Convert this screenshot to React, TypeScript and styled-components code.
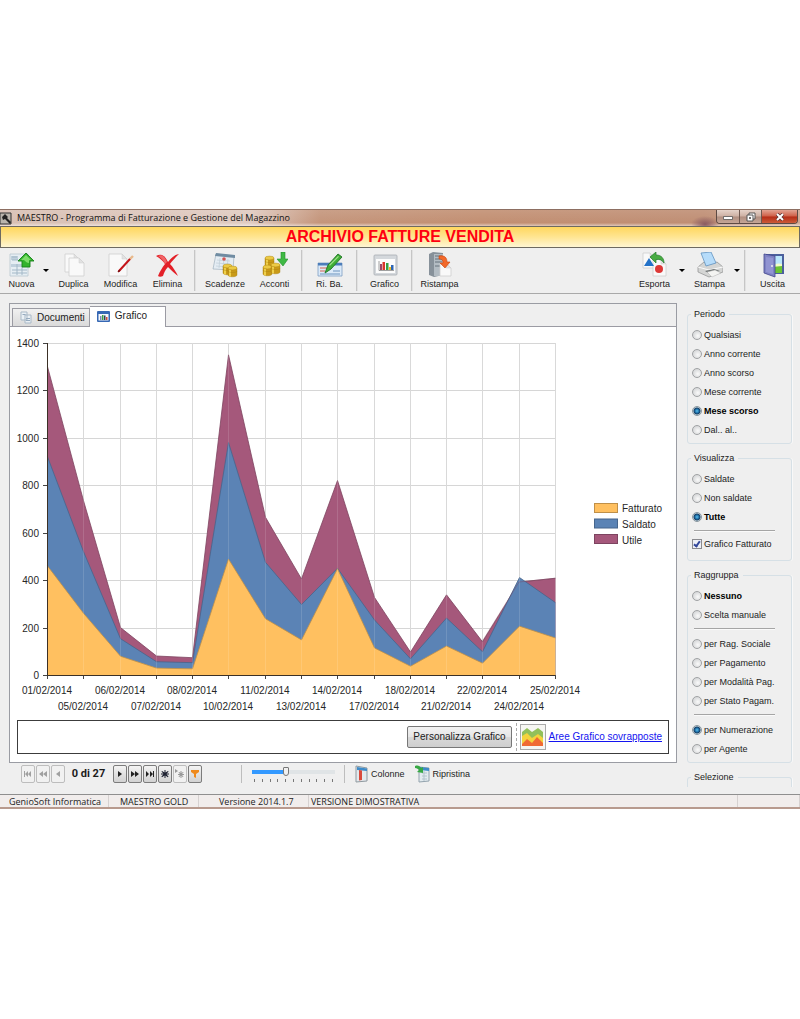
import React from 'react';
import styled, { createGlobalStyle, css } from 'styled-components';

const GlobalStyle = createGlobalStyle`
  *, *::before, *::after { box-sizing: border-box; }
  body {
    margin: 0;
    background: #fff;
    color: #1c1c1c;
    font-family: "Liberation Sans", Arial, sans-serif;
    font-size: 9px;
    line-height: 12px;
  }
  button, input { font: inherit; color: inherit; }
`;

const Page = styled.div`
  padding-top: 209px;
`;

const Window = styled.main`
  background: #efefef;
  min-width: 760px;
`;

/* ---------- title bar ---------- */

const TitleBar = styled.header`
  display: flex;
  align-items: center;
  height: 17px;
  border-top: 1px solid #8d6f62;
  background:
    radial-gradient(ellipse 14px 8px at 705px 14px, #8a5a60, transparent),
    linear-gradient(to bottom, rgba(255, 255, 255, 0.1), transparent 80%, rgba(255, 255, 255, 0.5)),
    linear-gradient(to right, #d8bfb3 0, #e0cbc1 250px, #c4957b 320px, #c28f72 60%, #bf8e74 88%, #cfa792);
`;

const AppTitle = styled.h1`
  flex: 1;
  margin: 0 0 0 5px;
  font: 400 9px/14px "Open Sans", sans-serif;
  color: #111;
`;

const WindowButtons = styled.div`
  display: flex;
  align-self: flex-start;
  margin-right: 2px;
  border: 1px solid #5d4a44;
  border-top: 0;
  border-radius: 0 0 4px 4px;
  overflow: hidden;
`;

const WindowButton = styled.button<{ $close?: boolean }>`
  display: flex;
  align-items: center;
  justify-content: center;
  width: ${(p) => (p.$close ? 36 : 22)}px;
  height: 13px;
  padding: 0;
  border: 0;
  background: linear-gradient(#e5d2c9, #cdb0a3 48%, #b08e80 52%, #c5a697);
  ${(p) => p.$close && css`background: linear-gradient(#e2a392, #cf5f47 48%, #b52c16 52%, #cc5a38);`}
  & + & { border-left: 1px solid #6f5850; }
`;

const Banner = styled.h2`
  margin: 0;
  border: 1px solid #6e6a60;
  background: linear-gradient(#ffd75e, #ffe592 50%, #fff6d3);
  color: #ff0010;
  font-size: 16px;
  line-height: 20px;
  font-weight: 700;
  text-align: center;
`;

/* ---------- main toolbar ---------- */

const Toolbar = styled.nav`
  display: flex;
  align-items: stretch;
  height: 46px;
  padding: 0 4px 0 1px;
  border-bottom: 1px solid #a9a9a9;
`;

const Spacer = styled.div`
  flex: 1;
`;

const ToolButton = styled.button<{ $width?: number }>`
  display: flex;
  flex-direction: column;
  align-items: center;
  width: ${(p) => p.$width ?? 47}px;
  padding: 4px 0 0;
  border: 0;
  background: none;
  line-height: 12px;
  white-space: nowrap;
  svg { display: block; }
`;

const DropButton = styled.button`
  width: 8px;
  padding: 0;
  border: 0;
  background: none;
  svg { display: block; margin: 0 auto; }
`;

const ToolSeparator = styled.div`
  width: 2px;
  margin: 2px 3px;
  background: #c6c6c6;
  border-right: 1px solid #e2e2e2;
`;

/* ---------- body ---------- */

const Body = styled.div`
  display: grid;
  grid-template-columns: minmax(0, 1fr) 123px;
  padding-top: 9px;
`;

const Content = styled.div`
  display: flex;
  flex-direction: column;
  padding-left: 9px;
`;

const Panel = styled.section`
  border: 1px solid #9a9ca3;
  background: #fff;
`;

const TabStrip = styled.div`
  display: flex;
  align-items: flex-end;
  height: 23px;
  padding: 2px 0 0 2px;
  background: #efefef;
  box-shadow: inset 0 -1px #9b9ba3;
`;

const Tab = styled.button<{ $active?: boolean }>`
  display: flex;
  align-items: center;
  gap: 5px;
  height: 19px;
  padding: 0 4px 0 7px;
  border: 1px solid #9b9ba3;
  background: linear-gradient(#f1f1f1, #dadada);
  font-size: 10px;
  ${(p) =>
    p.$active &&
    css`
      height: 21px;
      padding: 0 18px 2px 7px;
      border-left: 0;
      border-bottom: 0;
      background: #fff;
    `}
`;

const ChartSvg = styled.svg`
  display: block;
  width: 100%;
  height: auto;
  text { font-size: 10px; fill: #262626; }
`;

const ChartActions = styled.div`
  display: flex;
  align-items: center;
  justify-content: flex-end;
  height: 34px;
  margin: 3px 7px 8px;
  padding-right: 6px;
  border: 1px solid #3c3c3c;
`;

const PushButton = styled.button`
  height: 22px;
  padding: 0 5px;
  border: 1px solid #777;
  border-radius: 2px;
  background: linear-gradient(#f2f2f2, #e6e6e6 48%, #d8d8d8 52%, #cecece);
  font-size: 10px;
`;

const ActionDivider = styled.div`
  height: 28px;
  margin: 0 3px 0 4px;
  border-left: 1px dashed #aaa;
`;

const IconTile = styled.div`
  width: 26px;
  height: 26px;
  margin-right: 3px;
  border: 1px solid #aaa;
  background: #f6f6f3;
  svg { display: block; }
`;

const ActionLink = styled.a`
  color: #1414f0;
  font-size: 10px;
  text-decoration: underline;
`;

/* ---------- record bar ---------- */

const RecordBar = styled.div`
  display: flex;
  align-items: center;
  height: 22px;
  padding-left: 12px;
`;

const RecordButton = styled.button`
  display: flex;
  align-items: center;
  justify-content: center;
  width: 14px;
  height: 18px;
  margin-right: 1px;
  padding: 0;
  border: 1px solid #7c7c7c;
  border-radius: 2px;
  background: linear-gradient(#f4f4f4, #e2e2e2 50%, #d2d2d2);
  &:disabled { border-color: #bdbdbd; background: #f1f1f1; }
`;

const RecordCount = styled.output`
  width: 47px;
  padding-right: 2px;
  text-align: center;
  font: 700 11px/14px Roboto, sans-serif;
`;

const BarDivider = styled.div<{ $before: number; $after: number }>`
  width: 1px;
  height: 18px;
  margin: 0 ${(p) => p.$after}px 0 ${(p) => p.$before}px;
  background: #bdbdbd;
`;

const Zoom = styled.div`
  display: flex;
  flex-direction: column;
  width: 83px;
`;

const ZoomInput = styled.input`
  appearance: none;
  width: 100%;
  height: 10px;
  margin: 0;
  background: linear-gradient(to right, #3399ff 33px, #e0e4e6 33px) center / 100% 4px no-repeat;
  &::-webkit-slider-thumb {
    appearance: none;
    width: 6px;
    height: 9px;
    border: 1px solid #777;
    border-radius: 1px 1px 3px 3px;
    background: #f0f0f0;
  }
`;

const Ticks = styled.div`
  display: flex;
  justify-content: space-between;
  margin: 2px 2px 0;
  span { width: 1px; height: 3px; background: #777; }
`;

const GridButton = styled.button`
  display: flex;
  align-items: center;
  gap: 3px;
  margin-right: 10px;
  padding: 0;
  border: 0;
  background: none;
`;

/* ---------- filters ---------- */

const Filters = styled.aside`
  display: flex;
  flex-direction: column;
  gap: 8px;
  padding: 5px 8px 7px 10px;
`;

const Group = styled.fieldset<{ $bottom?: number; $open?: boolean }>`
  min-width: 0;
  margin: 0;
  padding: 5px 4px ${(p) => p.$bottom ?? 4}px;
  border: 1px solid #d6e0e6;
  border-radius: 3px;
  box-shadow: 1px 0 #f8f8f8;
  ${(p) =>
    p.$open &&
    css`
      height: 16px;
      padding: 0 4px;
      border-bottom: 0;
      border-radius: 3px 3px 0 0;
    `}
  legend { margin-left: -1px; padding: 0 4px 0 3px; }
`;

const Choice = styled.label<{ $bold?: boolean }>`
  display: flex;
  align-items: center;
  gap: 2px;
  height: 19px;
  white-space: nowrap;
  font-weight: ${(p) => (p.$bold ? 700 : 400)};
  color: ${(p) => (p.$bold ? '#000' : 'inherit')};
`;

const Radio = styled.input`
  appearance: none;
  flex: none;
  width: 10px;
  height: 10px;
  margin: 0;
  border: 1px solid #a0a2a4;
  border-radius: 50%;
  background: radial-gradient(circle at 60% 60%, #fafafa, #c9cbcd);
  &:checked {
    border-color: #8a979f;
    background: radial-gradient(circle, #5cc0ec 0, #1b6ca6 2px, #173f63 3px, #d5e0e8 4px);
  }
`;

const Check = styled.input`
  appearance: none;
  flex: none;
  width: 10px;
  height: 10px;
  margin: 0;
  border: 1px solid #8b8b8f;
  background: #eef0f6;
  display: grid;
  place-items: center;
  &:checked::before {
    content: "";
    width: 4px;
    height: 7px;
    border: solid #33479a;
    border-width: 0 2px 2px 0;
    transform: rotate(35deg);
  }
`;

const Rule = styled.hr<{ $tight?: boolean }>`
  height: 2px;
  margin: 4px 12px ${(p) => (p.$tight ? 2 : 4)}px 2px;
  border: 0;
  border-top: 1px solid #a5a5a5;
  border-bottom: 1px solid #fafafa;
`;

/* ---------- status bar ---------- */

const StatusBar = styled.footer`
  display: flex;
  height: 15px;
  border-top: 1px solid #8f8f8f;
  border-bottom: 2px solid #b89a8e;
  background: #f1edec;
  color: #222;
  font: 400 9px/14px "Open Sans", sans-serif;
`;

const StatusCell = styled.div<{ $width?: number; $indent: number }>`
  ${(p) => (p.$width ? `width: ${p.$width}px;` : 'flex: 1;')}
  padding-left: ${(p) => p.$indent}px;
  border-right: 1px solid #d6d1d0;
  white-space: nowrap;
`;

/* ---------- icons ---------- */

const Icon = ({ children, size = 26 }: { children: React.ReactNode; size?: number }) => (
  <svg width={size} height={size} viewBox="0 0 26 26" aria-hidden="true">
    {children}
  </svg>
);

const Sheet = ({ x, y, w = 17, h = 21 }: { x: number; y: number; w?: number; h?: number }) => (
  <g>
    <path d={`M${x} ${y}h${w - 5}l5 5v${h - 5}h${-w}z`} fill="#f9f9f9" stroke="#cfcfcf" strokeWidth=".8" />
    <path d={`M${x + w - 5} ${y}v5h5z`} fill="#e2e2e2" stroke="#cfcfcf" strokeWidth=".5" />
  </g>
);

const NewIcon = () => (
  <Icon>
    <path d="M1 2h18v22H1z" fill="#e6eef3" stroke="#b9c6cf" strokeWidth=".8" />
    <path d="M2 4h7v4H2zM2 12h17v3H2z" fill="#bfd0dc" />
    <path d="M3 5h5M3 8h6M3 18h15M3 21h15M8 12v11M13 15v8" stroke="#a3b8c7" strokeWidth="1" fill="none" />
    <path d="M17 1l8 8h-4v6h-8V9h-4z" fill="#33b32c" stroke="#16821a" strokeWidth=".9" />
    <path d="M17 3l5 5h-2v3c-2 0-3-1-5-3h-3z" fill="#7ddd69" />
  </Icon>
);

const CopyIcon = () => (
  <Icon>
    <Sheet x={4} y={2} w={14} h={18} />
    <Sheet x={8} y={6} w={15} h={18} />
  </Icon>
);

const EditIcon = () => (
  <Icon>
    <Sheet x={1} y={2} w={18} h={22} />
    <path d="M11 19L22 7" stroke="#c4151b" strokeWidth="2" strokeLinecap="round" />
    <path d="M22 7l3-3" stroke="#e8b98c" strokeWidth="2.400" />
    <path d="M10 20l2-2" stroke="#7b0f12" strokeWidth="1.500" />
  </Icon>
);

const DeleteIcon = () => (
  <Icon>
    <path d="M1 4c5-3 9-1 12 6c3-4 6-7 11-8c-4 4-7 7-9 10c3 3 6 8 8 12c-4-3-7-6-10-9c-3 3-4 6-5 9c-2 1-4 1-5 0c2-5 4-8 7-12c-2-3-5-6-9-8z" fill="#e32028" />
    <path d="M3 4c4-2 7 1 9 6l-2 2c-2-4-4-6-7-8z" fill="#f06568" />
  </Icon>
);

const Coins = ({ x, y }: { x: number; y: number }) => (
  <g stroke="#a57e12" strokeWidth=".4">
    <path d={`M${x} ${y}v7c0 2.400 9 2.400 9 0v-7z`} fill="#c99a18" />
    <path d={`M${x + 1} ${y + 1}v7l2 .8v-7z`} fill="#efd04c" stroke="none" />
    <path d={`M${x} ${y + 3}c0 2 9 2 9 0`} fill="none" />
    <ellipse cx={x + 4.5} cy={y} rx="4.500" ry="1.900" fill="#ecca45" />
  </g>
);

const DueIcon = () => (
  <Icon>
    <path d="M4 2l18 2-1 14-20-1z" fill="#e4ecf3" stroke="#94a6b5" strokeWidth=".6" />
    <path d="M4 1l19 2v3L3 4z" fill="#708ca2" />
    <path d="M5 8l13 1M4 11l14 1M4 14l13 1M8 6l-1 10M12 6l-1 10M16 7l-1 9" stroke="#c3d0da" strokeWidth=".8" />
    <circle cx="12" cy="7" r="1.800" fill="#d45553" />
    <Coins x={11} y={14} />
    <Coins x={16} y={16} />
  </Icon>
);

const DepositIcon = () => (
  <Icon>
    <Coins x={3} y={6} />
    <Coins x={1} y={15} />
    <Coins x={9} y={13} />
    <path d="M19 0h4v7h3l-5 7-6-7h4z" fill="#3fb944" stroke="#218d2b" strokeWidth=".6" />
  </Icon>
);

const ChequeIcon = () => (
  <Icon>
    <path d="M1 11h24v13H1z" fill="#dceaf8" stroke="#7f9fc3" strokeWidth=".8" />
    <path d="M1 11h24v2.500H1z" fill="#4c7dba" />
    <path d="M3 16h8M3 19h5" stroke="#d56350" strokeWidth="1.200" />
    <path d="M16 19h7M3 22h20" stroke="#6c93bd" strokeWidth="1.200" />
    <path d="M8 21l3-8L21 2l4 3-11 12z" fill="#3fae35" stroke="#1f7426" strokeWidth=".9" />
    <path d="M12 13l9-9 1 .8-9 9z" fill="#9fe08a" />
  </Icon>
);

const ChartIcon = () => (
  <Icon>
    <rect x="2" y="3" width="23" height="20" rx="1" fill="#d4d8dc" stroke="#a8adb2" strokeWidth=".8" />
    <path d="M4 7h19v14H4z" fill="#fcfcfc" />
    <path d="M7 9v9.500h15" stroke="#888" strokeWidth=".8" fill="none" />
    <path d="M8 12h2v6H8z" fill="#9a4768" />
    <path d="M10.500 10h2.500v8h-2.500z" fill="#d9362b" />
    <path d="M14 11h2.500v7H14z" fill="#35a044" />
    <path d="M17 15h2v3h-2z" fill="#f0b825" />
    <path d="M19 13h2.500v5H19z" fill="#2e66b4" />
  </Icon>
);

const ReprintIcon = () => (
  <Icon>
    <path d="M2 2l4-2 10 1v22l-9 2-5-2z" fill="#87919a" />
    <path d="M7 2h9v22H7z" fill="#b3bcc3" />
    <path d="M8 4h7M8 7h7M8 10h7M8 14h7" stroke="#66727c" strokeWidth="1" />
    <Sheet x={13} y={11} w={11} h={13} />
    <path d="M12 4c6-1 8 2 8 6h3l-5 6-5-5h3c0-3-1-4-4-4z" fill="#f2692a" stroke="#c64410" strokeWidth=".6" />
  </Icon>
);

const ExportIcon = () => (
  <Icon>
    <Sheet x={1} y={1} w={12} h={15} />
    <Sheet x={11} y={7} w={13} h={17} />
    <path d="M7 6l5 8H2z" fill="#2372c8" />
    <circle cx="17" cy="17" r="4" fill="#dd3836" />
    <path d="M8 5l6-5v3c6 0 8 4 8 8-2-3-4-4-8-3.500V11z" fill="#48ac42" stroke="#24792b" strokeWidth=".7" />
  </Icon>
);

const PrintIcon = () => (
  <Icon>
    <path d="M1 15l6-5 3 3 10-3 6 5v5l-14 5-11-5z" fill="#d4d5d4" stroke="#8c8e8e" strokeWidth=".7" />
    <path d="M4 1l10-1 5 11-10 3z" fill="#b6dcfa" stroke="#6293c0" strokeWidth=".8" />
    <path d="M1 15l11 3 14-3" stroke="#fafafa" fill="none" />
    <path d="M8 19l9-2 6 2-10 3z" fill="#6d7272" />
    <path d="M10 20l8-2 6 3-9 4z" fill="#f4f4f2" stroke="#aaa" strokeWidth=".4" />
  </Icon>
);

const ExitIcon = () => (
  <Icon>
    <path d="M6 2h18v20H6z" fill="#4b5f9c" />
    <path d="M12 4h10v9H12z" fill="#b9e6fb" />
    <path d="M12 13h10v8H12z" fill="#6bc434" />
    <path d="M12 15c3-4 7-4 10-3v2z" fill="#f2fcc8" />
    <path d="M4 2l11 2v21L4 21z" fill="#7f82c4" stroke="#42468d" strokeWidth=".8" />
    <path d="M6 5l7 1v16l-7-2z" fill="#9194d2" />
    <circle cx="12" cy="14" r="1" fill="#eee" />
  </Icon>
);

const DocumentsIcon = () => (
  <svg width="12" height="13" viewBox="0 0 12 13" aria-hidden="true">
    <path d="M1 1h6v8H1zM5 4h6v8H5z" fill="#eaf0f5" stroke="#a9b9c7" />
    <path d="M2.500 3.500h3M6 7.500h4M6 9.500h4" stroke="#96abbf" />
  </svg>
);

const GraphTabIcon = () => (
  <svg width="13" height="11" viewBox="0 0 13 11" aria-hidden="true">
    <rect width="13" height="11" rx="1" fill="#3668b4" />
    <path d="M1.500 3h10v6.500h-10z" fill="#f4f7fb" />
    <path d="M3 5h1.500v4H3z" fill="#7d8bb0" />
    <path d="M5 4h1.500v5H5z" fill="#3ca145" />
    <path d="M7 4.500h1.500V9H7z" fill="#33405e" />
    <path d="M9 6h1.500v3H9z" fill="#cd4b3b" />
  </svg>
);

const AreasIcon = () => (
  <svg width="24" height="24" viewBox="0 0 24 24" aria-hidden="true">
    <path d="M1 7l5-4 5 4 6-4 5 4v14H1z" fill="#92c05a" />
    <path d="M1 11l5-3 5 5 6-4 5 4v8H1z" fill="#f4d33d" />
    <path d="M1 19l5-5 5 4 5-6 6 6v3H1z" fill="#f06a34" />
  </svg>
);

const ColumnsIcon = () => (
  <svg width="13" height="18" viewBox="0 0 13 18" aria-hidden="true">
    <path d="M1 1l11 2v13L1 17z" fill="#e3e9ed" stroke="#8f999f" />
    <path d="M2 2l10 1.500V6L2 5z" fill="#3f8bc8" />
    <path d="M4 5l3 .5V15l-3 .5z" fill="#d94a3c" />
  </svg>
);

const RestoreIcon = () => (
  <svg width="15" height="18" viewBox="0 0 15 18" aria-hidden="true">
    <path d="M4 2l10 1v13L4 17z" fill="#e3ebef" stroke="#93a3ad" />
    <path d="M5 2l9 1v3L5 5z" fill="#3f8bc8" />
    <path d="M7 8h5M7 11h5M7 14h5M9 6v10" stroke="#b4c3cc" />
    <path d="M0 1c3-1 5 0 6 2l2-1v6L2 7l2-2C3 4 2 3 0 3z" fill="#37a844" />
  </svg>
);

const DropArrow = () => (
  <svg width="6" height="3" viewBox="0 0 6 3" aria-hidden="true">
    <path d="M0 0h6L3 3z" fill="#000" />
  </svg>
);

type Glyph = 'first' | 'rewind' | 'prev' | 'next' | 'forward' | 'last' | 'new' | 'mark' | 'filter';

const glyphPaths: Record<Glyph, string> = {
  first: 'M1 2h1v6H1zM2 5l3-3v6zM5 5l3-3v6z',
  rewind: 'M1 5l4-3v6zM5 5l4-3v6z',
  prev: 'M3 5l4-3v6z',
  next: 'M3 2l4 3-4 3z',
  forward: 'M1 2l4 3-4 3zM5 2l4 3-4 3z',
  last: 'M1 2l3 3-3 3zM5 2l3 3-3 3zM8 2h1v6H8z',
  new: 'M4.500 1h1v2.500L8 2l.6.7L6.500 4.500H9v1H6.500l2 2-.7.7L5.500 6.500V9h-1V6.500L2 8.200l-.6-.7 2-2H1v-1h2.500L1.500 2.700 2 2l2.500 1.500z',
  mark: 'M0 0l3 2-3 2zM5.500 2h1v2L8 3l.6.6L7 5h2v1H7l1.500 1.500-.7.700-1.300-1.500V9h-1V6.700L4.200 8.200l-.7-.7L5 6H3V5h2L3.500 3.600 4.200 3l1.300 1z',
  filter: 'M1 1h8v2L6 5v4L4 8V5L1 3z',
};

const RecordGlyph = ({ name, color }: { name: Glyph; color: string }) => (
  <svg width="10" height="10" viewBox="0 0 10 10" aria-hidden="true">
    <path d={glyphPaths[name]} fill={color} />
  </svg>
);

/* ---------- chart ---------- */

const days = ['01', '05', '06', '07', '08', '10', '11', '13', '14', '17', '18', '21', '22', '24', '25'];
const series = [
  { name: 'Utile', color: '#a5587b', line: '#7d4460', values: [1300, 735, 200, 80, 73, 1350, 665, 405, 820, 327, 97, 338, 140, 392, 408] },
  { name: 'Saldato', color: '#5b83b5', line: '#46658c', values: [920, 520, 153, 56, 52, 980, 475, 297, 450, 232, 68, 240, 98, 411, 305] },
  { name: 'Fatturato', color: '#ffc060', line: '#c09048', values: [460, 260, 79, 29, 26, 489, 237, 148, 448, 114, 37, 122, 50, 206, 156] },
];
const LEFT = 37;
const RIGHT = 545;
const BASE = 348;
const px = (i: number) => Math.round(LEFT + ((RIGHT - LEFT) * i) / (days.length - 1));
const py = (v: number) => BASE - (v * 332) / 1400;
const levels = [0, 200, 400, 600, 800, 1000, 1200, 1400];

const Chart = () => (
  <ChartSvg viewBox="0 0 666 390" role="img" aria-label="Grafico fatture">
    {levels.map((v) => (
      <g key={v}>
        <path d={`M${LEFT} ${Math.round(py(v)) + 0.5}H${RIGHT}`} stroke="#d6d6d6" />
        <path d={`M${LEFT - 4} ${Math.round(py(v)) + 0.5}h4`} stroke="#444" />
        <text x="29" y={Math.round(py(v)) + 4} textAnchor="end">{v}</text>
      </g>
    ))}
    {days.map((d, i) => (
      <path key={d} d={`M${px(i) + 0.5} 16V${BASE}`} stroke="#d4d4d4" />
    ))}
    {series.map((s) => {
      const pts = s.values.map((v, i) => `${px(i) + 0.5},${py(v)}`).join(' ');
      return (
        <g key={s.name}>
          <polygon points={`${LEFT + 0.5},${BASE} ${pts} ${RIGHT + 0.5},${BASE}`} fill={s.color} />
          <polyline points={pts} fill="none" stroke={s.line} strokeWidth=".8" />
        </g>
      );
    })}
    <path d={`M${px(12)} ${py(140)}L${px(13)} ${py(392)}L${px(14)} ${py(408)}`} fill="none" stroke="#7d4460" strokeOpacity=".5" strokeWidth=".8" />
    {days.map((d, i) => (
      <g key={d}>
        <path d={`M${px(i) + 0.5} 16V${BASE}`} stroke="#fff" strokeOpacity=".13" />
        <path d={`M${px(i) + 0.5} ${BASE}v4`} stroke="#444" />
        <text x={px(i)} y={i % 2 ? 383 : 367} textAnchor="middle">{`${d}/02/2014`}</text>
      </g>
    ))}
    <path d={`M${LEFT + 0.5} 16V${BASE + 0.5}H${RIGHT}`} fill="none" stroke="#3b3026" />
    {[...series].reverse().map((s, i) => (
      <g key={s.name}>
        <rect x="584.500" y={176.5 + i * 15.5} width="23" height="9" fill={s.color} stroke={s.line} />
        <text x="612" y={185 + i * 16}>{s.name}</text>
      </g>
    ))}
  </ChartSvg>
);

/* ---------- composition ---------- */

interface Option {
  label: string;
  checked?: boolean;
  bold?: boolean;
}

const Radios = ({ name, options }: { name: string; options: Option[] }) => (
  <>
    {options.map((o) => (
      <Choice key={o.label} $bold={o.bold}>
        <Radio type="radio" name={name} defaultChecked={o.checked} />
        {o.label}
      </Choice>
    ))}
  </>
);

const Tool = ({ icon, label, width }: { icon: React.ReactNode; label: string; width?: number }) => (
  <ToolButton type="button" $width={width}>
    {icon}
    {label}
  </ToolButton>
);

const Drop = ({ label }: { label: string }) => (
  <DropButton type="button" aria-label={label}>
    <DropArrow />
  </DropButton>
);

export default function App() {
  return (
    <>
      <GlobalStyle />
      <Page>
        <Window>
          <TitleBar>
            <svg width="12" height="13" viewBox="0 0 12 13" aria-hidden="true">
              <path d="M0 1h11v11H0z" fill="#b9b4ac" stroke="#333" />
              <path d="M2 5l3-3 3 3-1 1 4 4-1 2-5-5-2 1z" fill="#222" />
            </svg>
            <AppTitle>MAESTRO - Programma di Fatturazione e Gestione del Magazzino</AppTitle>
            <WindowButtons>
              <WindowButton type="button" aria-label="Riduci a icona">
                <svg width="10" height="8" viewBox="0 0 10 8"><path d="M.5 3.500h9v3h-9z" fill="#fff" stroke="#555" strokeWidth=".8" /></svg>
              </WindowButton>
              <WindowButton type="button" aria-label="Ripristina finestra">
                <svg width="10" height="10" viewBox="0 0 10 10"><path d="M3 1h6v6H3z" fill="#fff" stroke="#555" /><path d="M1 3h6v6H1z" fill="#fff" stroke="#555" /><path d="M3.500 5.500h1v1h-1z" stroke="#555" /></svg>
              </WindowButton>
              <WindowButton type="button" $close aria-label="Chiudi">
                <svg width="10" height="8" viewBox="0 0 10 8"><path d="M2 1l6 6M8 1L2 7" stroke="#5d3432" strokeWidth="3.500" /><path d="M2 1l6 6M8 1L2 7" stroke="#fff" strokeWidth="2" /></svg>
              </WindowButton>
            </WindowButtons>
          </TitleBar>
          <Banner>ARCHIVIO FATTURE VENDITA</Banner>

          <Toolbar>
            <Tool icon={<NewIcon />} label="Nuova" width={41} />
            <Drop label="Opzioni nuova" />
            <Tool icon={<CopyIcon />} label="Duplica" />
            <Tool icon={<EditIcon />} label="Modifica" />
            <Tool icon={<DeleteIcon />} label="Elimina" />
            <ToolSeparator />
            <Tool icon={<DueIcon />} label="Scadenze" width={52} />
            <Tool icon={<DepositIcon />} label="Acconti" />
            <ToolSeparator />
            <Tool icon={<ChequeIcon />} label="Ri. Ba." />
            <ToolSeparator />
            <Tool icon={<ChartIcon />} label="Grafico" />
            <ToolSeparator />
            <Tool icon={<ReprintIcon />} label="Ristampa" />
            <Spacer />
            <Tool icon={<ExportIcon />} label="Esporta" />
            <Drop label="Opzioni esporta" />
            <Tool icon={<PrintIcon />} label="Stampa" />
            <Drop label="Opzioni stampa" />
            <ToolSeparator />
            <Tool icon={<ExitIcon />} label="Uscita" />
          </Toolbar>

          <Body>
            <Content>
              <Panel>
                <TabStrip>
                  <Tab type="button"><DocumentsIcon />Documenti</Tab>
                  <Tab type="button" $active><GraphTabIcon />Grafico</Tab>
                </TabStrip>
                <Chart />
                <ChartActions>
                  <PushButton type="button">Personalizza Grafico</PushButton>
                  <ActionDivider />
                  <IconTile><AreasIcon /></IconTile>
                  <ActionLink href="#aree">Aree Grafico sovrapposte</ActionLink>
                </ChartActions>
              </Panel>

              <RecordBar>
                <RecordButton type="button" disabled aria-label="Primo"><RecordGlyph name="first" color="#a0a0a0" /></RecordButton>
                <RecordButton type="button" disabled aria-label="Pagina precedente"><RecordGlyph name="rewind" color="#a0a0a0" /></RecordButton>
                <RecordButton type="button" disabled aria-label="Precedente"><RecordGlyph name="prev" color="#a0a0a0" /></RecordButton>
                <RecordCount>0 di 27</RecordCount>
                <RecordButton type="button" aria-label="Successivo"><RecordGlyph name="next" color="#222" /></RecordButton>
                <RecordButton type="button" aria-label="Pagina successiva"><RecordGlyph name="forward" color="#222" /></RecordButton>
                <RecordButton type="button" aria-label="Ultimo"><RecordGlyph name="last" color="#222" /></RecordButton>
                <RecordButton type="button" aria-label="Segna"><RecordGlyph name="new" color="#1c2030" /></RecordButton>
                <RecordButton type="button" disabled aria-label="Vai al segno"><RecordGlyph name="mark" color="#999" /></RecordButton>
                <RecordButton type="button" aria-label="Filtro"><RecordGlyph name="filter" color="#ef8a1c" /></RecordButton>
                <BarDivider $before={38} $after={10} />
                <Zoom>
                  <ZoomInput type="range" min={0} max={10} defaultValue={4} aria-label="Zoom" />
                  <Ticks>{Array.from({ length: 11 }, (_, i) => <span key={i} />)}</Ticks>
                </Zoom>
                <BarDivider $before={9} $after={10} />
                <GridButton type="button"><ColumnsIcon />Colonne</GridButton>
                <GridButton type="button"><RestoreIcon />Ripristina</GridButton>
              </RecordBar>
            </Content>

            <Filters>
              <Group>
                <legend>Periodo</legend>
                <Radios
                  name="periodo"
                  options={[
                    { label: 'Qualsiasi' },
                    { label: 'Anno corrente' },
                    { label: 'Anno scorso' },
                    { label: 'Mese corrente' },
                    { label: 'Mese scorso', checked: true, bold: true },
                    { label: 'Dal.. al..' },
                  ]}
                />
              </Group>
              <Group $bottom={7}>
                <legend>Visualizza</legend>
                <Radios
                  name="visualizza"
                  options={[{ label: 'Saldate' }, { label: 'Non saldate' }, { label: 'Tutte', checked: true, bold: true }]}
                />
                <Rule $tight />
                <Choice>
                  <Check type="checkbox" defaultChecked />
                  Grafico Fatturato
                </Choice>
              </Group>
              <Group>
                <legend>Raggruppa</legend>
                <Radios name="scelta" options={[{ label: 'Nessuno', bold: true }, { label: 'Scelta manuale' }]} />
                <Rule />
                <Radios
                  name="scelta"
                  options={[
                    { label: 'per Rag. Sociale' },
                    { label: 'per Pagamento' },
                    { label: 'per Modalità Pag.' },
                    { label: 'per Stato Pagam.' },
                  ]}
                />
                <Rule />
                <Radios name="scelta" options={[{ label: 'per Numerazione', checked: true }, { label: 'per Agente' }]} />
              </Group>
              <Group $open>
                <legend>Selezione</legend>
              </Group>
            </Filters>
          </Body>

          <StatusBar>
            <StatusCell $width={109} $indent={9}>GenioSoft Informatica</StatusCell>
            <StatusCell $width={90} $indent={11}>MAESTRO GOLD</StatusCell>
            <StatusCell $width={110} $indent={20}>Versione 2014.1.7</StatusCell>
            <StatusCell $indent={2}>VERSIONE DIMOSTRATIVA</StatusCell>
            <StatusCell $width={62} $indent={0} />
          </StatusBar>
        </Window>
      </Page>
    </>
  );
}
